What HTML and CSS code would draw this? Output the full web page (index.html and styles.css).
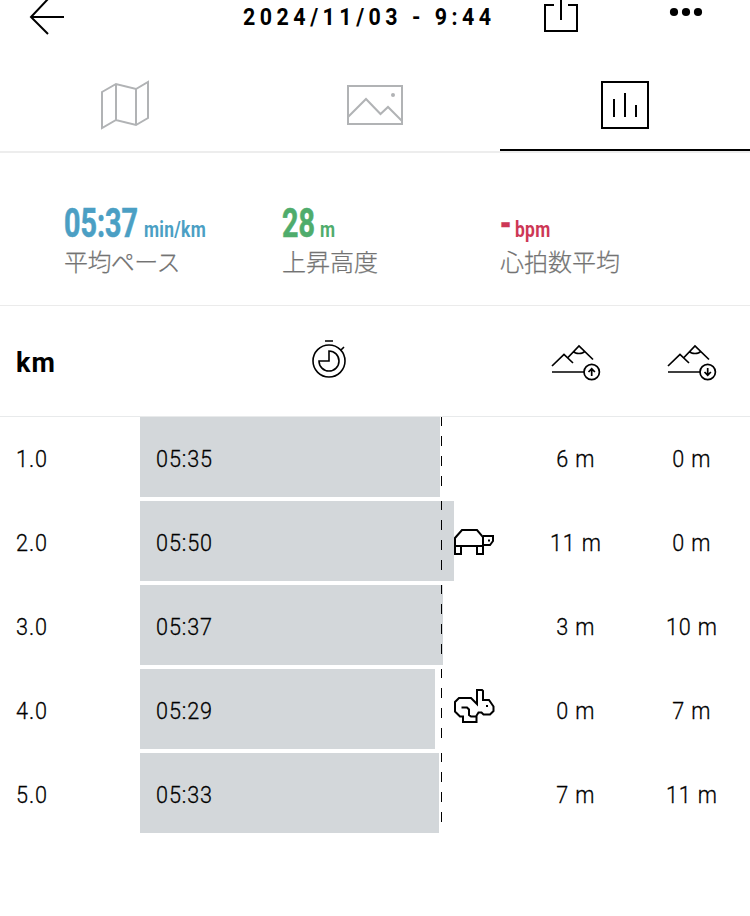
FILE: index.html
```
<!DOCTYPE html>
<html lang="ja">
<head>
<meta charset="utf-8">
<title>2024/11/03 - 9:44</title>
<link rel="stylesheet" href="styles.css">
</head>
<body>
<header class="topbar">
  <svg class="back" width="36" height="36" viewBox="0 0 36 36"><path d="M19 -1L2 17L19 34M2 17H35"/></svg>
  <h1 class="title">2024/11/03 - 9:44</h1>
  <svg class="share" width="36" height="34" viewBox="0 0 36 34"><path d="M11 5H2V31H34V5H25M18 0V20"/></svg>
  <svg class="more" width="34" height="10" viewBox="0 0 34 10"><circle cx="5" cy="5" r="4.1"/><circle cx="17" cy="5" r="4.1"/><circle cx="29" cy="5" r="4.1"/></svg>
</header>
<nav class="tabs">
  <a class="tab"><svg width="50" height="50" viewBox="0 0 50 50"><path d="M2 12L16 4L36 9L48 2V38L36 45L16 40L2 48ZM16 4V40M36 9V45"/></svg></a>
  <a class="tab"><svg width="58" height="42" viewBox="0 0 58 42"><path d="M2 2H56V40H2ZM2 33L20 15L34.500 30L42 23L56 37"/><circle class="dot" cx="47" cy="11" r="2"/></svg></a>
  <a class="tab active"><svg width="50" height="50" viewBox="0 0 50 50"><path d="M2 2H48V48H2ZM14 19V37M25 13V37M36 25V37"/></svg></a>
</nav>
<section class="stats">
  <div class="stat pace"><div class="figure"><span class="value">05:37</span><span class="unit">min/km</span></div><div class="label">平均ペース</div></div>
  <div class="stat climb"><div class="figure"><span class="value">28</span><span class="unit">m</span></div><div class="label">上昇高度</div></div>
  <div class="stat heart"><div class="figure"><span class="value">-</span><span class="unit">bpm</span></div><div class="label">心拍数平均</div></div>
</section>
<main>
  <div class="row head">
    <div class="km">km</div>
    <div class="clock"><svg width="36" height="40" viewBox="0 0 36 40"><circle cx="18" cy="22" r="16"/><path d="M18 12A10 10 0 1 1 8 22H18ZM14 2H22M30 11L33 8"/></svg></div>
    <div class="cell"><svg width="50" height="38" viewBox="0 0 50 38"><path d="M1 22L13 10.500L22 19M16.500 14L28 2L42 15.500M22.500 7.500Q24 9.500 28 9.500T33.500 7.500M1 28H33"/><circle cx="40.700" cy="28" r="7.700"/><path d="M40.700 32V25M37.500 28L40.700 24.800L43.900 28"/></svg></div>
    <div class="cell"><svg width="50" height="38" viewBox="0 0 50 38"><path d="M1 22L13 10.500L22 19M16.500 14L28 2L42 15.500M22.500 7.500Q24 9.500 28 9.500T33.500 7.500M1 28H33"/><circle cx="40.700" cy="28" r="7.700"/><path d="M40.700 24V31M37.500 28L40.700 31.200L43.900 28"/></svg></div>
  </div>
  <div class="row"><div class="km"><span>1.0</span></div><div class="track"><div class="bar" style="width:300px"><span>05:35</span></div></div><div class="cell"><span>6 m</span></div><div class="cell"><span>0 m</span></div></div>
  <div class="row"><div class="km"><span>2.0</span></div><div class="track"><div class="bar" style="width:314px"><span>05:50</span></div>
    <svg class="animal" width="42" height="40" viewBox="0 0 42 40"><path d="M1 25V17L8 9H23L29 16V25ZM1 25V33H7V25M23 25V33H29V25M29 15H39V20L36 24H29"/><rect class="eye" x="34" y="18.500" width="2" height="2"/></svg></div><div class="cell"><span>11 m</span></div><div class="cell"><span>0 m</span></div></div>
  <div class="row"><div class="km"><span>3.0</span></div><div class="track"><div class="bar" style="width:303px"><span>05:37</span></div></div><div class="cell"><span>3 m</span></div><div class="cell"><span>10 m</span></div></div>
  <div class="row"><div class="km"><span>4.0</span></div><div class="track"><div class="bar" style="width:295px"><span>05:29</span></div>
    <svg class="animal" width="42" height="40" viewBox="0 0 42 40"><path d="M7.500 18.500H13L15 20.500V26L17 27.500H22.500V33H9V27.500H6L1 22.500V13L5 9H17L23 15V1H28L29 2V11H35L39.500 17.500V22L36 25.500H29.500L27.500 23.500H24.500L22 27.500"/><rect class="eye" x="32" y="16" width="2" height="2"/></svg></div><div class="cell"><span>0 m</span></div><div class="cell"><span>7 m</span></div></div>
  <div class="row"><div class="km"><span>5.0</span></div><div class="track"><div class="bar" style="width:299px"><span>05:33</span></div></div><div class="cell"><span>7 m</span></div><div class="cell"><span>11 m</span></div></div>
</main>
</body>
</html>
```
FILE: styles.css
```
* { box-sizing: border-box; }
body { margin: 0; background: #fff; color: #000; font-family: Roboto, "Noto Sans CJK JP", sans-serif; overflow: hidden; }
svg { display: block; fill: none; stroke: #000; stroke-width: 2; flex: none; }
.topbar { height: 58px; display: grid; grid-template-columns: 243px 300px 126px 81px; align-items: start; }
.back { margin-left: 29px; }
.title { margin: 0; padding-top: 4px; font-size: 23px; line-height: 28px; font-weight: 700; letter-spacing: 4.85px; white-space: nowrap; transform: scaleX(.93); transform-origin: left; }
.more { margin-top: 7px; fill: #000; stroke: none; }
.tabs { height: 95px; display: grid; grid-template-columns: repeat(3, 1fr); border-bottom: 2px solid #ededed; }
.tab { display: flex; justify-content: center; align-items: center; }
.tab svg { stroke: #b1b3b5; }
.tab .dot { fill: #b1b3b5; stroke: none; }
.tab.active { padding-top: 2px; border-bottom: 2px solid #000; }
.tab.active svg { stroke: #000; }
.stats { height: 153px; padding: 48px 0 0 64px; display: grid; grid-template-columns: 218px 218px 1fr; border-bottom: 1px solid #ebebeb; }
.figure { height: 45px; display: flex; align-items: baseline; font-weight: 700; white-space: nowrap; }
.value { font-size: 41px; line-height: 45px; transform: scaleX(.7); transform-origin: left; -webkit-text-stroke: .6px currentColor; }
.unit { font-size: 22px; letter-spacing: .4px; transform: scaleX(.79); transform-origin: left; }
.pace .value { width: 80px; }
.climb .value { width: 38px; }
.heart .value { width: 15px; }
.pace { color: #4b9fc4; }
.climb { color: #4fac6c; }
.heart { color: #cd3755; }
.label { font-family: "Noto Sans CJK JP", sans-serif; font-weight: 300; font-size: 24px; line-height: 30px; color: #737373; -webkit-text-stroke: .25px #737373; }
.pace .label { letter-spacing: -.6px; }
.row { height: 84px; display: grid; grid-template-columns: 140px 378px 116px 116px; font-size: 24px; line-height: 84px; font-weight: 300; }
.head { height: 111px; line-height: 115px; border-bottom: 1px solid #e8eaeb; }
.km { padding-left: 16px; }
.head .km { font-weight: 700; font-size: 27px; letter-spacing: 1px; }
.clock { display: flex; justify-content: center; align-items: center; }
.clock svg { margin-top: -9px; stroke-width: 1.6; }
.cell { text-align: center; }
.head .cell { display: flex; justify-content: center; align-items: center; }
.head .cell svg { margin-top: -1px; stroke-width: 1.7; }
.row span { display: inline-block; letter-spacing: 1px; transform: scaleX(.9); transform-origin: left; -webkit-text-stroke: .3px #000; }
.row .cell span { transform-origin: center; }
.track { position: relative; height: 80px; }
.track::after { content: ""; position: absolute; left: 301px; top: 0; width: 1px; height: 75px; background: repeating-linear-gradient(#000 0 10px, transparent 10px 20px) 0 -1px / 1px 80px; }
.bar { height: 80px; padding-left: 16px; background: #d3d7da; }
.animal { position: absolute; left: 314px; top: 20px; }
.animal .eye { fill: #000; stroke: none; }
```
